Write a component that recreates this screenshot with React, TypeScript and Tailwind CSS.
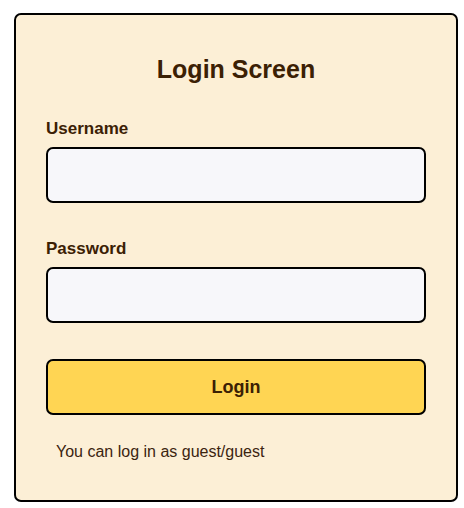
import React from 'react';

export default function App() {
  return (
    <div className="min-h-screen bg-white pt-[13px] pl-[14px] font-['Liberation_Sans',Arial,sans-serif]">
      <div className="w-[444px] h-[489px] rounded-[7px] border-2 border-black bg-[#fcefd6] px-[30px] pt-[40px] text-[#3b2004]">
        <h1 className="text-center text-[25px] font-bold leading-[29px]">Login Screen</h1>

        <form className="mt-[35px]" onSubmit={(e) => e.preventDefault()}>
          <label className="block text-[17px] font-bold leading-[20px] mb-[8px]">Username</label>
          <input
            type="text"
            className="block w-full h-[56px] rounded-[7px] border-2 border-black bg-[#f7f7fa] px-3 text-[16px] outline-none"
          />

          <label className="block text-[17px] font-bold leading-[20px] mt-[36px] mb-[8px]">Password</label>
          <input
            type="password"
            className="block w-full h-[56px] rounded-[7px] border-2 border-black bg-[#f7f7fa] px-3 text-[16px] outline-none"
          />

          <button
            type="submit"
            className="mt-[36px] block w-full h-[56px] rounded-[7px] border-2 border-black bg-[#ffd553] text-[18px] font-bold text-[#3b2004]"
          >
            Login
          </button>
        </form>

        <p className="mt-[28px] pl-[10px] text-[16px] leading-[18px] text-[#3b2410]">
          You can log in as guest/guest
        </p>
      </div>
    </div>
  );
}
